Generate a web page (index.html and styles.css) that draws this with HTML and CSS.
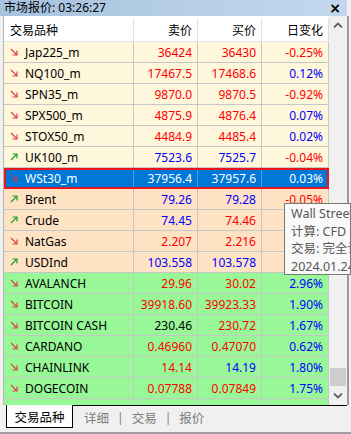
FILE: index.html
```html
<!DOCTYPE html>
<html lang="zh">
<head>
<meta charset="utf-8">
<link rel="stylesheet" href="styles.css">
</head>
<body>
<div class="win">
  <div class="title">
    <span class="title-text">市场报价: 03:26:27</span>
    <span class="close">×</span>
  </div>
  <div class="main">
    <div class="table">
      <div class="row head">
        <div class="c sym">交易品种</div>
        <div class="c num">卖价</div>
        <div class="c num">买价</div>
        <div class="c num">日变化</div>
      </div>

      <div class="row y"><div class="c sym"><svg class="ar" viewBox="0 0 8 8"><path class="dn" d="M1 1L7 7M7 2.5V7H2.5"/></svg>Jap225_m</div><div class="c num r">36424</div><div class="c num r">36430</div><div class="c num r">-0.25%</div></div>
      <div class="row y"><div class="c sym"><svg class="ar" viewBox="0 0 8 8"><path class="dn" d="M1 1L7 7M7 2.5V7H2.5"/></svg>NQ100_m</div><div class="c num r">17467.5</div><div class="c num r">17468.6</div><div class="c num b">0.12%</div></div>
      <div class="row y"><div class="c sym"><svg class="ar" viewBox="0 0 8 8"><path class="dn" d="M1 1L7 7M7 2.5V7H2.5"/></svg>SPN35_m</div><div class="c num r">9870.0</div><div class="c num r">9870.5</div><div class="c num r">-0.92%</div></div>
      <div class="row y"><div class="c sym"><svg class="ar" viewBox="0 0 8 8"><path class="dn" d="M1 1L7 7M7 2.5V7H2.5"/></svg>SPX500_m</div><div class="c num r">4875.9</div><div class="c num r">4876.4</div><div class="c num b">0.07%</div></div>
      <div class="row y"><div class="c sym"><svg class="ar" viewBox="0 0 8 8"><path class="dn" d="M1 1L7 7M7 2.5V7H2.5"/></svg>STOX50_m</div><div class="c num r">4484.9</div><div class="c num r">4485.4</div><div class="c num b">0.02%</div></div>
      <div class="row y"><div class="c sym"><svg class="ar" viewBox="0 0 8 8"><path class="up" d="M1 7L7 1M2.5 1H7V5.5"/></svg>UK100_m</div><div class="c num b">7523.6</div><div class="c num b">7525.7</div><div class="c num r">-0.04%</div></div>
      <div class="row sel"><div class="c sym"><svg class="ar" viewBox="0 0 8 8"><path class="dn" d="M1 1L7 7M7 2.5V7H2.5"/></svg>WSt30_m</div><div class="c num">37956.4</div><div class="c num">37957.6</div><div class="c num">0.03%</div></div>
      <div class="row o"><div class="c sym"><svg class="ar" viewBox="0 0 8 8"><path class="up" d="M1 7L7 1M2.5 1H7V5.5"/></svg>Brent</div><div class="c num b">79.26</div><div class="c num b">79.28</div><div class="c num r">-0.05%</div></div>
      <div class="row o"><div class="c sym"><svg class="ar" viewBox="0 0 8 8"><path class="up" d="M1 7L7 1M2.5 1H7V5.5"/></svg>Crude</div><div class="c num b">74.45</div><div class="c num r">74.46</div><div class="c num"></div></div>
      <div class="row o"><div class="c sym"><svg class="ar" viewBox="0 0 8 8"><path class="dn" d="M1 1L7 7M7 2.5V7H2.5"/></svg>NatGas</div><div class="c num r">2.207</div><div class="c num r">2.216</div><div class="c num"></div></div>
      <div class="row o"><div class="c sym"><svg class="ar" viewBox="0 0 8 8"><path class="up" d="M1 7L7 1M2.5 1H7V5.5"/></svg>USDInd</div><div class="c num b">103.558</div><div class="c num b">103.578</div><div class="c num"></div></div>
      <div class="row g"><div class="c sym"><svg class="ar" viewBox="0 0 8 8"><path class="dn" d="M1 1L7 7M7 2.5V7H2.5"/></svg>AVALANCH</div><div class="c num r">29.96</div><div class="c num r">30.02</div><div class="c num b">2.96%</div></div>
      <div class="row g"><div class="c sym"><svg class="ar" viewBox="0 0 8 8"><path class="dn" d="M1 1L7 7M7 2.5V7H2.5"/></svg>BITCOIN</div><div class="c num r">39918.60</div><div class="c num r">39923.33</div><div class="c num b">1.90%</div></div>
      <div class="row g"><div class="c sym"><svg class="ar" viewBox="0 0 8 8"><path class="dn" d="M1 1L7 7M7 2.5V7H2.5"/></svg>BITCOIN CASH</div><div class="c num k">230.46</div><div class="c num r">230.72</div><div class="c num b">1.67%</div></div>
      <div class="row g"><div class="c sym"><svg class="ar" viewBox="0 0 8 8"><path class="dn" d="M1 1L7 7M7 2.5V7H2.5"/></svg>CARDANO</div><div class="c num r">0.46960</div><div class="c num r">0.47070</div><div class="c num b">0.62%</div></div>
      <div class="row g"><div class="c sym"><svg class="ar" viewBox="0 0 8 8"><path class="dn" d="M1 1L7 7M7 2.5V7H2.5"/></svg>CHAINLINK</div><div class="c num r">14.14</div><div class="c num b">14.19</div><div class="c num b">1.80%</div></div>
      <div class="row g"><div class="c sym"><svg class="ar" viewBox="0 0 8 8"><path class="dn" d="M1 1L7 7M7 2.5V7H2.5"/></svg>DOGECOIN</div><div class="c num r">0.07788</div><div class="c num r">0.07849</div><div class="c num b">1.75%</div></div>
      <div class="row g"><div class="c sym"></div><div class="c num"></div><div class="c num"></div><div class="c num"></div></div>
    </div>
    <div class="scroll">
      <svg class="chev" viewBox="0 0 10 6"><path d="M1 5.5L5 1.5L9 5.5"/></svg>
      <div class="track"><div class="thumb"></div></div>
      <svg class="chev" viewBox="0 0 10 6"><path d="M1 0.5L5 4.5L9 0.5"/></svg>
    </div>
    <div class="tip">
      <div class="tl">Wall Street</div>
      <div class="tl">计算: CFD L</div>
      <div class="tl">交易: 完全访</div>
      <div class="tl">2024.01.24</div>
    </div>
  </div>
  <div class="tabs">
    <div class="tab active">交易品种</div>
    <div class="tab">详细</div>
    <span class="sep">|</span>
    <div class="tab">交易</div>
    <span class="sep">|</span>
    <div class="tab">报价</div>
  </div>
</div>
</body>
</html>
```
FILE: styles.css
```css
html, body {
  margin: 0;
  padding: 0;
}
body {
  width: 351px;
  height: 434px;
  overflow: hidden;
  background: #f0f0f0;
  font-family: "Noto Sans", "Noto Sans CJK SC", sans-serif;
  font-size: 12px;
  color: #000;
}
.win {
  width: 351px;
  height: 434px;
  display: flex;
  flex-direction: column;
  box-sizing: border-box;
  border-bottom: 2px solid #a0a0a0;
}
.title {
  height: 16px;
  flex: none;
  display: flex;
  align-items: center;
  justify-content: space-between;
  margin-right: 4px;
  background: linear-gradient(to right, #a6c2de, #c4d8ed);
  padding-left: 4px;
  padding-right: 6px;
  line-height: 16px;
}
.title-text {
  font-size: 12px;
}
.close {
  font-weight: bold;
  font-size: 14px;
  font-family: "DejaVu Sans", sans-serif;
  line-height: 14px;
}
.main {
  position: relative;
  height: 389px;
  flex: none;
  display: flex;
  padding-left: 3px;
}
.table {
  width: 326px;
  height: 389px;
  overflow: hidden;
  border-left: 1px solid #b8b8b8;
  box-sizing: border-box;
  background: #fff;
}
.row {
  display: grid;
  grid-template-columns: 130px 64px 64px 67px;
  height: 21px;
  box-sizing: border-box;
  border-bottom: 1px solid #c6c6c6;
}
.row.head {
  height: 26px;
  background: #fff;
  border-bottom: 1px solid #e4e4e4;
  padding-top: 2px;
}
.c {
  box-sizing: border-box;
  border-right: 1px solid #c6c6c6;
  display: flex;
  align-items: center;
  white-space: nowrap;
  overflow: hidden;
}
.head .c {
  border-right-color: #e0e0e0;
}
.sym {
  padding-left: 6px;
}
.num {
  justify-content: flex-end;
  padding-right: 5px;
}
.ar {
  width: 8px;
  height: 8px;
  flex: none;
  margin-right: 7px;
}
.ar path {
  fill: none;
  stroke-width: 1.2;
}
.ar .dn { stroke: #e2403c; }
.ar .up { stroke: #1ea51e; }
.y { background: #fff7dc; }
.o { background: #fee2c4; }
.g { background: #98f898; }
.r { color: #ff0000; }
.b { color: #0000ff; }
.k { color: #000; }
.sel {
  background: #0078d7;
  color: #fff;
  outline: 2px solid #e8141e;
  outline-offset: -2px;
  position: relative;
}
.sel .c {
  border-right-color: #5a9ad8;
}
.sel .ar .dn { stroke: #c83c50; }
.scroll {
  width: 20px;
  height: 389px;
  flex: none;
  background: #f0f0f0;
  display: flex;
  flex-direction: column;
  align-items: center;
  box-sizing: border-box;
  border-right: 2px solid #9a9a9a;
}
.chev {
  width: 10px;
  height: 6px;
  flex: none;
  margin: 6px 0;
}
.chev path {
  fill: none;
  stroke: #606060;
  stroke-width: 1.8;
}
.track {
  flex: 1;
  width: 100%;
  display: flex;
  flex-direction: column;
  justify-content: flex-end;
}
.thumb {
  height: 18px;
  margin: 0 1px 1px;
  background: #cdcdcd;
}
.tip {
  position: absolute;
  left: 284px;
  top: 187px;
  width: 67px;
  height: 72px;
  box-sizing: border-box;
  background: #f9f9f9;
  border: 1px solid #7a7a7a;
  color: #575757;
  font-size: 12.5px;
  padding: 1px 0 0 6px;
  line-height: 17.5px;
  white-space: nowrap;
  overflow: hidden;
  z-index: 5;
}
.tabs {
  flex: 1;
  display: flex;
  align-items: flex-start;
  margin-left: 6px;
  margin-right: 4px;
  border-top: 1px solid #000;
  color: #7c7c7c;
}
.tab {
  height: 22px;
  display: flex;
  align-items: center;
  font-size: 12.5px;
  padding-top: 1px;
  box-sizing: border-box;
}
.tab.active {
  width: 67px;
  margin-top: -1px;
  height: 23px;
  background: #fff;
  color: #000;
  border: 1px solid #000;
  border-top: none;
  justify-content: center;
  margin-right: 11px;
}
.sep {
  height: 22px;
  display: flex;
  align-items: center;
  margin: 0 8px;
  color: #7c7c7c;
}
```
